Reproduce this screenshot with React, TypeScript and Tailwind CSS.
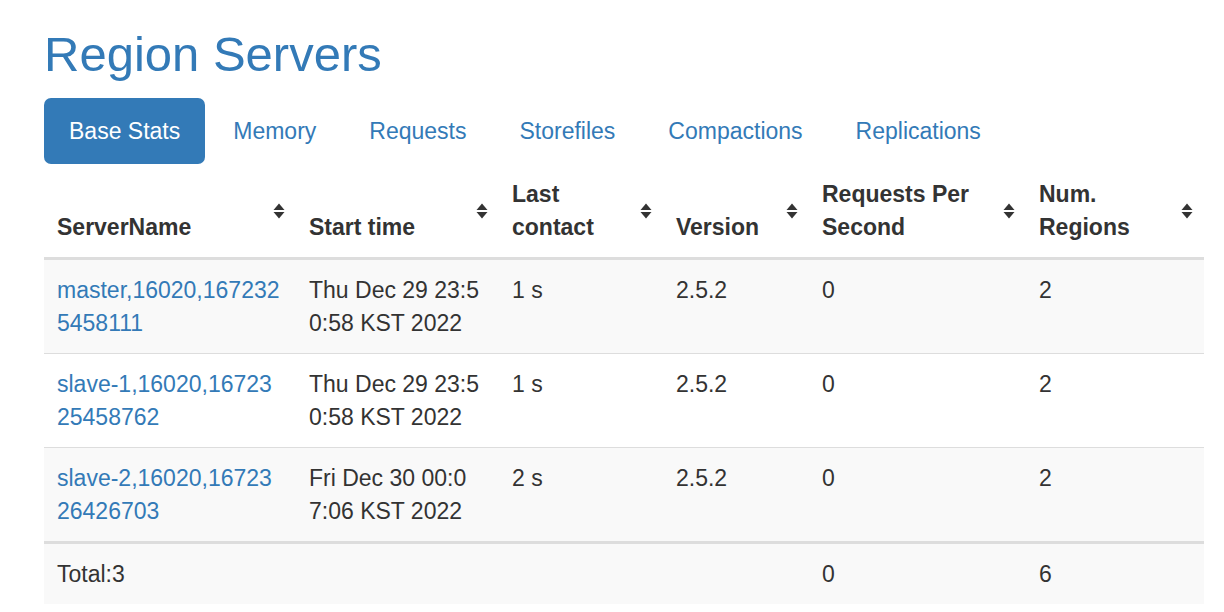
const tabs = ['Base Stats', 'Memory', 'Requests', 'Storefiles', 'Compactions', 'Replications']

const columns = [
  { label: 'ServerName', width: 'w-[252px]' },
  { label: 'Start time', width: 'w-[203px]' },
  { label: 'Last contact', width: 'w-[164px]' },
  { label: 'Version', width: 'w-[146px]' },
  { label: 'Requests Per Second', width: 'w-[217px]' },
  { label: 'Num. Regions', width: 'w-[178px]' },
]

// long values wrap mid-word in the narrow columns
const servers = [
  { name: ['master,16020,167232', '5458111'], start: ['Thu Dec 29 23:5', '0:58 KST 2022'], contact: '1 s', version: '2.5.2', rps: '0', regions: '2' },
  { name: ['slave-1,16020,16723', '25458762'], start: ['Thu Dec 29 23:5', '0:58 KST 2022'], contact: '1 s', version: '2.5.2', rps: '0', regions: '2' },
  { name: ['slave-2,16020,16723', '26426703'], start: ['Fri Dec 30 00:0', '7:06 KST 2022'], contact: '2 s', version: '2.5.2', rps: '0', regions: '2' },
]

function SortIcon() {
  return (
    <svg
      className="absolute right-[11px] top-1/2 -translate-y-1/2"
      width="12"
      height="16"
      viewBox="0 0 12 16"
    >
      <path d="M6 0.5 L11.5 7 H0.5 Z" fill="#333" />
      <path d="M6 15.5 L11.5 9 H0.5 Z" fill="#333" />
    </svg>
  )
}

export default function App() {
  const cell = (i: number) =>
    `px-[13px] pt-[14px] pb-[13px] align-top ${i > 0 ? 'border-t border-[#ddd]' : ''}`

  return (
    <div className="min-h-screen bg-white pl-[44px] pr-[20px] text-[23px] leading-[33px] text-[#333] [font-family:'Liberation_Sans',Arial,sans-serif]">
      <h2 className="pt-[27px] mb-[17px] text-[49px] leading-[54px] font-normal text-[#337ab7]">
        Region Servers
      </h2>

      <ul className="flex">
        {tabs.map((t, i) => (
          <li key={t} className={i > 0 ? 'ml-[3px]' : ''}>
            <a
              href="#"
              className={
                i === 0
                  ? 'block rounded-[7px] bg-[#337ab7] px-[25px] py-[16.5px] text-white'
                  : 'block rounded-[7px] px-[25px] py-[16.5px] text-[#337ab7]'
              }
            >
              {t}
            </a>
          </li>
        ))}
      </ul>

      <table className="w-[1160px] table-fixed border-collapse">
        <colgroup>
          {columns.map((c) => (
            <col key={c.label} className={c.width} />
          ))}
        </colgroup>
        <thead>
          <tr>
            {columns.map((c) => (
              <th
                key={c.label}
                className="relative border-b-[3px] border-[#ddd] pl-[13px] pr-[40px] pt-[14px] pb-[13px] text-left align-bottom font-bold"
              >
                {c.label}
                <SortIcon />
              </th>
            ))}
          </tr>
        </thead>
        <tbody>
          {servers.map((s, i) => (
            <tr key={s.name[0]} className={i % 2 === 0 ? 'bg-[#f9f9f9]' : 'bg-white'}>
              <td className={cell(i)}>
                <a href="#" className="text-[#337ab7]">
                  {s.name[0]}
                  <br />
                  {s.name[1]}
                </a>
              </td>
              <td className={cell(i)}>
                {s.start[0]}
                <br />
                {s.start[1]}
              </td>
              <td className={cell(i)}>{s.contact}</td>
              <td className={cell(i)}>{s.version}</td>
              <td className={cell(i)}>{s.rps}</td>
              <td className={cell(i)}>{s.regions}</td>
            </tr>
          ))}
        </tbody>
        <tbody>
          <tr className="bg-[#f9f9f9]">
            <td className="border-t-[3px] border-[#ddd] px-[13px] pt-[14px] pb-[13px] align-top">Total:3</td>
            <td className="border-t-[3px] border-[#ddd] px-[13px] pt-[14px] pb-[13px]"></td>
            <td className="border-t-[3px] border-[#ddd] px-[13px] pt-[14px] pb-[13px]"></td>
            <td className="border-t-[3px] border-[#ddd] px-[13px] pt-[14px] pb-[13px]"></td>
            <td className="border-t-[3px] border-[#ddd] px-[13px] pt-[14px] pb-[13px] align-top">0</td>
            <td className="border-t-[3px] border-[#ddd] px-[13px] pt-[14px] pb-[13px] align-top">6</td>
          </tr>
        </tbody>
      </table>
    </div>
  )
}
